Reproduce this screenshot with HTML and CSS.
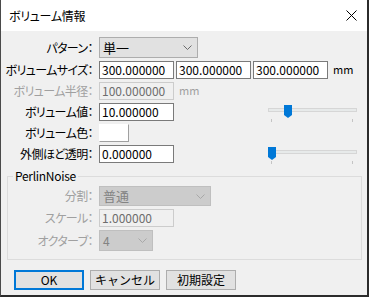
FILE: index.html
```html
<!DOCTYPE html>
<html lang="ja">
<head>
    <meta charset="UTF-8">
    <title>ボリューム情報</title>
    <link rel="stylesheet" href="styles.css">
</head>
<body>
    <div class="dialog">
        <!-- タイトルバー -->
        <div class="titlebar">
            <span class="title">ボリューム情報</span>
            <svg class="close" width="11" height="11" viewBox="0 0 11 11">
                <path d="M0.5 0.5 L10.5 10.5 M10.5 0.5 L0.5 10.5" stroke="#000" stroke-width="1" fill="none"/>
            </svg>
        </div>

        <div class="content">
            <div class="form">
                <div class="row row-combo">
                    <span class="label">パターン：</span>
                    <div class="combo combo-pattern">
                        <span>単一</span>
                        <svg class="arrow" width="9" height="5" viewBox="0 0 9 5"><path d="M0.5 0.5 L4.5 4.5 L8.5 0.5" stroke="#6b6b6b" fill="none"/></svg>
                    </div>
                </div>

                <div class="row">
                    <span class="label">ボリュームサイズ：</span>
                    <div class="textbox">300.000000</div>
                    <div class="textbox">300.000000</div>
                    <div class="textbox">300.000000</div>
                    <span class="unit">mm</span>
                </div>

                <div class="row disabled">
                    <span class="label">ボリューム半径：</span>
                    <div class="textbox">100.000000</div>
                    <span class="unit">mm</span>
                </div>

                <div class="row">
                    <span class="label">ボリューム値：</span>
                    <div class="textbox">10.000000</div>
                    <div class="slider">
                        <div class="track"></div>
                        <svg class="thumb thumb-value" width="8" height="13" viewBox="0 0 8 13"><path d="M0 0 H8 V10 L4 13 L0 10 Z" fill="#0078d7"/></svg>
                        <span class="tick tick-left"></span>
                        <span class="tick tick-right"></span>
                    </div>
                </div>

                <div class="row">
                    <span class="label">ボリューム色：</span>
                    <div class="colorbox"></div>
                </div>

                <div class="row">
                    <span class="label">外側ほど透明：</span>
                    <div class="textbox">0.000000</div>
                    <div class="slider">
                        <div class="track"></div>
                        <svg class="thumb thumb-alpha" width="8" height="13" viewBox="0 0 8 13"><path d="M0 0 H8 V10 L4 13 L0 10 Z" fill="#0078d7"/></svg>
                        <span class="tick tick-left"></span>
                        <span class="tick tick-right"></span>
                    </div>
                </div>
            </div>

            <!-- PerlinNoise グループ -->
            <fieldset class="group">
                <legend>PerlinNoise</legend>
                <div class="row row-div disabled">
                    <span class="label">分割：</span>
                    <div class="combo combo-div">
                        <span>普通</span>
                        <svg class="arrow" width="9" height="5" viewBox="0 0 9 5"><path d="M0.5 0.5 L4.5 4.5 L8.5 0.5" stroke="#a8a8a8" fill="none"/></svg>
                    </div>
                </div>
                <div class="row row-scale disabled">
                    <span class="label">スケール：</span>
                    <div class="textbox">1.000000</div>
                </div>
                <div class="row row-oct disabled">
                    <span class="label">オクターブ：</span>
                    <div class="combo combo-oct">
                        <span>4</span>
                        <svg class="arrow" width="9" height="5" viewBox="0 0 9 5"><path d="M0.5 0.5 L4.5 4.5 L8.5 0.5" stroke="#a8a8a8" fill="none"/></svg>
                    </div>
                </div>
            </fieldset>

            <div class="buttons">
                <button type="button" class="btn btn-default">OK</button>
                <button type="button" class="btn">キャンセル</button>
                <button type="button" class="btn">初期設定</button>
            </div>
        </div>
    </div>
</body>
</html>
```

FILE: styles.css
```css
/* 全体 */
body {
    margin: 0;
    padding: 0;
    font-family: "Noto Sans CJK JP", "Noto Sans", sans-serif;
    font-size: 12px;
    color: #000;
    background-color: #2b2b2b;
}

.dialog {
    width: 369px;
    height: 297px;
    box-sizing: border-box;
    border-left: 1px solid #4a4a4a;
    border-right: 2px solid #2b2b2b;
    border-bottom: 2px solid #2b2b2b;
    background-color: #f0f0f0;
    display: flex;
    flex-direction: column;
    font-feature-settings: "palt";
}

/* タイトルバー */
.titlebar {
    height: 31px;
    flex: none;
    background-color: #fff;
    display: flex;
    align-items: center;
    padding-left: 8px;
    padding-right: 10px;
}

.title {
    flex: 1;
    font-size: 12px;
    letter-spacing: -0.3px;
}

.close {
    display: block;
}

/* フォーム */
.content {
    flex: 1;
    display: flex;
    flex-direction: column;
}

.form {
    padding-top: 6px;
}

.row {
    display: flex;
    align-items: center;
    height: 18px;
    margin-bottom: 3px;
    line-height: 16px;
}

.row-combo {
    height: 21px;
    margin-bottom: 3px;
}

.label {
    width: 94px;
    box-sizing: border-box;
    padding-right: 2px;
    margin-right: 4px;
    text-align: right;
    white-space: nowrap;
    letter-spacing: -0.6px;
}

.textbox {
    width: 75px;
    height: 18px;
    box-sizing: border-box;
    border: 1px solid #7a7a7a;
    background-color: #fff;
    padding: 0 2px;
    margin-right: 2px;
    line-height: 16px;
}

.unit {
    margin-left: 3px;
    font-size: 11px;
    position: relative;
    top: -1px;
}

.disabled .label,
.disabled .unit {
    color: #a0a0a0;
}

.disabled .textbox {
    background-color: #f0f0f0;
    border-color: #cccccc;
    color: #6d6d6d;
}

/* コンボボックス */
.combo {
    height: 21px;
    box-sizing: border-box;
    border: 1px solid #adadad;
    background-color: #e1e1e1;
    display: flex;
    align-items: center;
    padding: 0 5px 0 3px;
    font-size: 13px;
}

.combo span {
    flex: 1;
}

.combo .arrow {
    display: block;
}

.combo-pattern {
    width: 99px;
}

.disabled .combo {
    background-color: #cccccc;
    border-color: #bfbfbf;
    color: #838383;
}

.combo-div {
    width: 112px;
    height: 20px;
}

.combo-oct {
    width: 54px;
    font-size: 12px;
}

/* 色 */
.colorbox {
    width: 30px;
    height: 18px;
    box-sizing: border-box;
    background-color: #fff;
    border: 1px solid #fff;
    border-right-color: #a0a0a0;
    border-bottom-color: #a0a0a0;
}

/* スライダー */
.slider {
    position: relative;
    width: 89px;
    height: 18px;
    margin-left: auto;
    margin-right: 10px;
}

.track {
    position: absolute;
    left: 0;
    right: 0;
    top: 5px;
    height: 4px;
    box-sizing: border-box;
    border: 1px solid #d6d6d6;
    background-color: #e7eaea;
}

.thumb {
    position: absolute;
    top: 2px;
}

.thumb-value {
    left: 16px;
}

.thumb-alpha {
    left: 0;
}

.tick {
    position: absolute;
    top: 16px;
    width: 1px;
    height: 3px;
    background-color: #c4c4c4;
}

.tick-left {
    left: 3px;
}

.tick-right {
    left: 84px;
}

/* グループ */
.group {
    margin: 3px 5px 0 6px;
    padding: 0 0 8px 0;
    border: 1px solid #dcdcdc;
    min-width: 0;
}

.group legend {
    margin-left: 5px;
    padding: 0 2px;
    line-height: 14px;
    font-size: 12px;
    letter-spacing: -0.3px;
}

.group .label {
    width: 87px;
}

.row-div {
    height: 20px;
    margin-top: 3px;
}

.row-scale {
    height: 18px;
    margin-bottom: 3px;
}

.row-oct {
    height: 21px;
    margin-bottom: 0;
}

/* ボタン */
.buttons {
    display: flex;
    gap: 6px;
    margin-top: 10px;
    padding-left: 13px;
}

.btn {
    width: 70px;
    height: 20px;
    box-sizing: border-box;
    border: 1px solid #adadad;
    background-color: #e1e1e1;
    font-family: inherit;
    font-size: 12px;
    padding: 0;
    line-height: 16px;
    color: #000;
}

.btn-default {
    border: 2px solid #0078d7;
}
```
